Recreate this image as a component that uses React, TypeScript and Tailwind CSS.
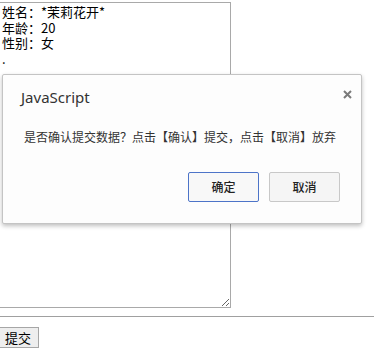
import { useState } from "react";

const info = "姓名：*茉莉花开*\n年龄：20\n性别：女\n.";

function ConfirmDialog() {
  return (
    <div className="absolute left-[2px] top-[74px] flex h-[150px] w-[360px] flex-col rounded-[2px] border border-[#c4c4c4] bg-[#fdfdfd] shadow-[0_2px_4px_rgba(0,0,0,0.25)] font-['Noto_Sans','Noto_Sans_CJK_SC',sans-serif] text-[#333]">
      {/* Header */}
      <div className="flex items-start justify-between pl-[18px] pr-[9px] pt-[12px]">
        <span className="text-[15px] leading-[20px] text-[#333]">JavaScript</span>
        <svg width="9" height="9" viewBox="0 0 9 9" className="mt-[3px]">
          <path d="M1 1 L8 8 M8 1 L1 8" stroke="#7a7a7a" strokeWidth="2" />
        </svg>
      </div>

      {/* Message */}
      <p className="mt-[22px] pl-[21px] text-[12px] leading-[16px] font-['Noto_Sans_CJK_SC',sans-serif]">
        是否确认提交数据？点击【确认】提交，点击【取消】放弃
      </p>

      {/* Buttons */}
      <div className="mt-auto flex justify-end gap-[10px] pb-[21px] pr-[21px]">
        <button className="h-[30px] w-[71px] rounded-[2px] border border-[#4d74c8] bg-[#f8f8f8] text-[12px] font-medium text-[#222] font-['Noto_Sans_CJK_SC',sans-serif]">
          确定
        </button>
        <button className="h-[30px] w-[71px] rounded-[2px] border border-[#c8c8c8] bg-[#f5f5f5] text-[12px] font-medium text-[#222] font-['Noto_Sans_CJK_SC',sans-serif]">
          取消
        </button>
      </div>
    </div>
  );
}

export default function App() {
  const [text, setText] = useState(info);

  return (
    <div className="relative h-[358px] w-[374px] overflow-hidden bg-white">
      <div className="pt-[2px]">
        <textarea
          value={text}
          onChange={(e) => setText(e.target.value)}
          className="-ml-px block h-[306px] w-[232px] resize border border-[#a9a9a9] bg-white px-[2px] py-[1px] text-[13px] leading-[15.5px] text-black outline-none font-['Noto_Sans_CJK_SC',monospace]"
        />
      </div>

      <hr className="mt-[8px] border-t border-[#a0a0a0]" />

      <div className="mt-[8px]">
        <button className="-ml-px h-[21px] w-[40px] border border-[#a6a6a6] bg-[#eeeeee] pl-[5px] text-left text-[13px] leading-[19px] text-black font-['Noto_Sans_CJK_SC',sans-serif]">
          提交
        </button>
      </div>

      <ConfirmDialog />
    </div>
  );
}
